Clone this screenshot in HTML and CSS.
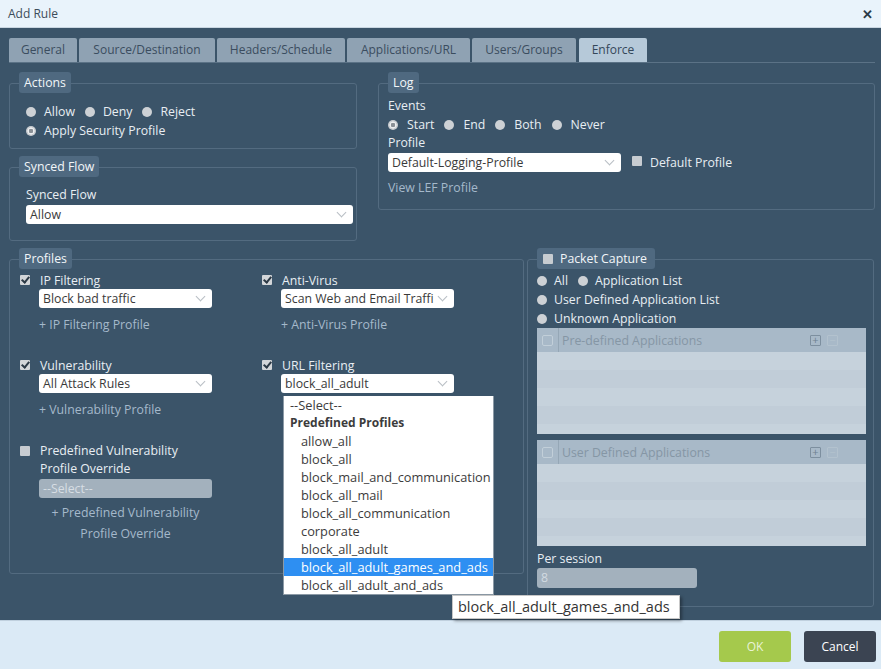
FILE: index.html
```html
<!DOCTYPE html>
<html>
<head>
<meta charset="utf-8">
<link rel="stylesheet" href="styles.css">
</head>
<body>
<div class="dialog">
  <div class="titlebar">
    <span class="title">Add Rule</span>
    <span class="close">&#x2715;</span>
  </div>
  <div class="main">
    <div class="tabs">
      <div class="tab w1">General</div>
      <div class="tab w2">Source/Destination</div>
      <div class="tab w3">Headers/Schedule</div>
      <div class="tab w4">Applications/URL</div>
      <div class="tab w5">Users/Groups</div>
      <div class="tab w6 active">Enforce</div>
    </div>

    <div class="toprow">
      <div class="leftcol">
        <div class="box actions">
          <div class="legend">Actions</div>
          <div class="radios pad16">
            <div class="line"><span class="radio"></span>Allow<span class="radio"></span>Deny<span class="radio"></span>Reject</div>
            <div class="line"><span class="radio on"></span>Apply Security Profile</div>
          </div>
        </div>
        <div class="box synced">
          <div class="legend">Synced Flow</div>
          <div class="syncbody">
            <div class="lbl">Synced Flow</div>
            <div class="select wide"><span>Allow</span><span class="chev"></span></div>
          </div>
        </div>
      </div>
      <div class="box log">
        <div class="legend">Log</div>
        <div class="logbody">
          <div class="lbl">Events</div>
          <div class="line radios-log"><span class="radio on"></span>Start<span class="radio"></span>End<span class="radio"></span>Both<span class="radio"></span>Never</div>
          <div class="lbl">Profile</div>
          <div class="profrow">
            <div class="select logsel"><span>Default-Logging-Profile</span><span class="chev"></span></div>
            <span class="check empty"></span><span class="dp">Default Profile</span>
          </div>
          <div class="link lef">View LEF Profile</div>
        </div>
      </div>
    </div>

    <div class="bottomrow">
      <div class="box profiles">
        <div class="legend">Profiles</div>
        <div class="pgrid">
          <div class="pcol first">
            <div class="pitem">
              <div class="chkline"><span class="check"></span>IP Filtering</div>
              <div class="select psel"><span>Block bad traffic</span><span class="chev"></span></div>
              <div class="link plink">+ IP Filtering Profile</div>
            </div>
            <div class="pitem">
              <div class="chkline"><span class="check"></span>Vulnerability</div>
              <div class="select psel"><span>All Attack Rules</span><span class="chev"></span></div>
              <div class="link plink">+ Vulnerability Profile</div>
            </div>
            <div class="pitem override">
              <div class="chkline two"><span class="check empty"></span><span>Predefined Vulnerability<br>Profile Override</span></div>
              <div class="select psel disabled"><span>--Select--</span></div>
              <div class="link center">+ Predefined Vulnerability<br>Profile Override</div>
            </div>
          </div>
          <div class="pcol">
            <div class="pitem">
              <div class="chkline"><span class="check"></span>Anti-Virus</div>
              <div class="select psel"><span class="clip">Scan Web and Email Traffi</span><span class="chev"></span></div>
              <div class="link plink">+ Anti-Virus Profile</div>
            </div>
            <div class="pitem">
              <div class="chkline"><span class="check"></span>URL Filtering</div>
              <div class="select psel"><span>block_all_adult</span><span class="chev"></span></div>
            </div>
          </div>
        </div>
      </div>

      <div class="box packet">
        <div class="legend pklegend"><span class="check empty"></span>Packet Capture</div>
        <div class="pkbody">
          <div class="line"><span class="radio"></span>All<span class="radio"></span>Application List</div>
          <div class="line"><span class="radio"></span>User Defined Application List</div>
          <div class="line l3"><span class="radio"></span>Unknown Application</div>
          <div class="grid">
            <div class="ghead"><span class="gchk"><span></span></span><span class="gtitle">Pre-defined Applications</span><span class="gbtn">+</span><span class="gbtn dim">&minus;</span></div>
            <div class="grow"></div><div class="grow alt"></div><div class="grow"></div><div class="grow alt"></div><div class="grow"></div>
          </div>
          <div class="grid g2">
            <div class="ghead"><span class="gchk"><span></span></span><span class="gtitle">User Defined Applications</span><span class="gbtn">+</span><span class="gbtn dim">&minus;</span></div>
            <div class="grow"></div><div class="grow alt"></div><div class="grow"></div><div class="grow alt"></div><div class="grow"></div>
          </div>
          <div class="lbl persess">Per session</div>
          <div class="numin">8</div>
        </div>
      </div>
    </div>

    <ul class="dropdown">
      <li>--Select--</li>
      <li class="grp">Predefined Profiles</li>
      <li class="sub">allow_all</li>
      <li class="sub">block_all</li>
      <li class="sub">block_mail_and_communication</li>
      <li class="sub">block_all_mail</li>
      <li class="sub">block_all_communication</li>
      <li class="sub">corporate</li>
      <li class="sub">block_all_adult</li>
      <li class="sub sel">block_all_adult_games_and_ads</li>
      <li class="sub">block_all_adult_and_ads</li>
    </ul>
    <div class="tooltip">block_all_adult_games_and_ads</div>
  </div>
  <div class="footer">
    <button class="btn ok">OK</button>
    <button class="btn cancel">Cancel</button>
  </div>
</div>
</body>
</html>
```

FILE: styles.css
```css
* { box-sizing: border-box; }
html, body { margin: 0; padding: 0; }
body {
  width: 881px;
  height: 669px;
  overflow: hidden;
  font-family: "Open Sans", "Noto Sans", sans-serif;
  font-size: 12.3px;
  color: #e8eef3;
}
.dialog { width: 881px; height: 669px; display: flex; flex-direction: column; }

.titlebar {
  height: 28px;
  background: #e9f3fb;
  border-bottom: 1px solid #c9d6e1;
  display: flex;
  align-items: center;
  justify-content: space-between;
  padding: 0 8px 0 8px;
  color: #3d4c5a;
}
.title { font-size: 12px; }
.close { font-size: 13px; font-weight: bold; color: #2b3a47; }

.main {
  position: relative;
  height: 592px;
  background: #3b5469;
  padding: 10px 6px 0 9px;
}

.tabs {
  display: flex;
  gap: 2px;
  height: 25px;
  border-bottom: 1px solid #5b7286;
  font-size: 12px;
}
.tab {
  height: 24px;
  line-height: 24px;
  text-align: center;
  background: #8fa2b3;
  color: #3b4d5f;
  border-radius: 2px 2px 0 0;
}
.tab.active { background: #b6c9d9; color: #34475a; }
.w1 { width: 68px; }
.w2 { width: 136px; }
.w3 { width: 128px; }
.w4 { width: 123px; }
.w5 { width: 104px; margin-right: 1px; }
.w6 { width: 68px; }

.box {
  border: 1px solid #536b80;
  border-radius: 3px;
}
.legend {
  display: flex;
  width: fit-content;
  align-items: center;
  height: 21px;
  margin-top: -12px;
  margin-left: 9px;
  padding: 0 5px;
  background: #4f6980;
  border-radius: 3px;
  color: #f2f6f9;
}
.pklegend { gap: 7px; padding: 0 8px 0 6px; }

.toprow { display: flex; gap: 21px; margin-top: 20px; }
.leftcol { width: 348px; display: flex; flex-direction: column; }
.actions { height: 66px; }
.synced { height: 74px; margin-top: 18px; }
.log { flex: 1; height: 127px; }

.line { display: flex; align-items: center; height: 19px; }
.radio {
  width: 10px; height: 10px; border-radius: 50%;
  background: #cdd1d5;
  margin-right: 8px;
  flex: none;
}
.radio ~ .radio { margin-left: 10px; }
.radio.on {
  background: radial-gradient(circle, #8a9096 0 2px, #eceef0 2.5px 3.3px, #c9cdd1 3.8px);
}
.pad16 { padding-left: 16px; margin-top: 9px; }

.check {
  width: 10px; height: 10px;
  background: #d3d6d9;
  border-radius: 1px;
  flex: none;
  position: relative;
}
.check::after {
  content: "";
  position: absolute;
  left: 3px; top: 0px;
  width: 3px; height: 6px;
  border: solid #2c3a46;
  border-width: 0 2px 2px 0;
  transform: rotate(40deg);
}
.check.empty::after { display: none; }
.check.empty { background: #c7ccd1; }

.lbl { height: 18px; line-height: 18px; }
.syncbody { padding: 9px 3px 0 16px; }
.syncbody .lbl { height: 19px; }

.select {
  height: 19px;
  background: #ffffff;
  border-radius: 3px;
  color: #3a3a3a;
  display: flex;
  align-items: center;
  justify-content: space-between;
  padding: 0 8px 0 4px;
  overflow: hidden;
  white-space: nowrap;
}
.chev {
  width: 7px; height: 7px;
  border: solid #b8bec4;
  border-width: 0 1px 1px 0;
  transform: rotate(45deg);
  margin-top: -5px;
  flex: none;
}
.wide { width: 327px; }

.logbody { padding: 4px 0 0 9px; }
.radios-log .radio { margin-right: 9px; }
.radios-log .radio ~ .radio { margin-left: 10px; }
.profrow { display: flex; align-items: center; margin-top: 1px; }
.logsel { width: 233px; }
.profrow .check { margin-left: 11px; margin-top: -4px; }
.dp { margin-left: 8px; }
.link { color: #a5b9cb; }
.lef { margin-top: 7px; height: 18px; line-height: 18px; }

.bottomrow { display: flex; gap: 3px; margin-top: 18px; }
.profiles { width: 515px; height: 315px; }
.packet { width: 347px; height: 348px; }

.pgrid { display: flex; padding-left: 10px; margin-top: 2px; }
.pcol { width: 252px; display: flex; flex-direction: column; }
.pcol.first { width: 242px; }
.pitem { height: 85px; }
.chkline { display: flex; align-items: center; height: 18px; gap: 10px; }
.chkline.two { align-items: flex-start; height: 37px; line-height: 18px; }
.chkline.two .check { margin-top: 4px; }
.psel { width: 173px; margin-left: 19px; }
.clip { white-space: nowrap; }
.plink { margin-left: 19px; margin-top: 8px; height: 18px; line-height: 18px; }
.override { margin-top: 1px; }
.disabled { background: #a3b1bd; color: #d7dee4; }
.center { width: 173px; margin-left: 19px; text-align: center; line-height: 21px; margin-top: 4px; }

.pkbody { padding: 2px 6px 0 9px; }
.pkbody .line .radio { margin-right: 7px; }
.pkbody .line .radio ~ .radio { margin-left: 10px; }
.grid { width: 329px; background: #c5d1db; margin-top: 0; height: 106px; overflow: hidden; }
.g2 { margin-top: 6px; }
.ghead { height: 24px; background: #a8b9c8; display: flex; align-items: center; color: #8596a5; }
.gchk { width: 22px; height: 24px; border-right: 1px solid #95a7b6; display: flex; align-items: center; justify-content: center; }
.gchk span { width: 11px; height: 11px; border: 1px solid #c2cfd9; border-radius: 2px; }
.gtitle { margin-left: 3px; flex: 1; }
.gbtn {
  width: 11px; height: 11px; border: 1px solid #7d8f9f; border-radius: 1px;
  font-size: 11px; line-height: 8px; text-align: center; color: #6f8292; margin-right: 6px;
}
.gbtn.dim { border-color: #b3c2ce; color: #b3c2ce; margin-right: 28px; }
.grow { height: 18px; background: #c6d2dc; }
.grow.alt { background: #c1cdd8; }
.persess { margin-top: 4px; }
.numin {
  width: 160px; height: 20px; background: #a3b1bd; border-radius: 3px;
  color: #d2dae1; padding-left: 4px; line-height: 20px;
}

.dropdown {
  position: absolute;
  left: 283px;
  top: 368px;
  width: 211px;
  margin: 0; padding: 0;
  list-style: none;
  background: #ffffff;
  border: 1px solid #8c9aa6;
  border-top: none;
  color: #3c3c3c;
  font-size: 12.8px;
}
.dropdown li { height: 18px; line-height: 18px; padding-left: 6px; white-space: nowrap; }
.dropdown .grp { font-weight: bold; font-size: 12px; }
.dropdown .sub { padding-left: 17px; }
.dropdown .sel { background: #2e8ff2; color: #ffffff; }

.tooltip {
  position: absolute;
  left: 452px;
  top: 567px;
  width: 228px;
  height: 24px;
  background: #ffffff;
  border: 1px solid #c7c7c7;
  box-shadow: 2px 2px 3px rgba(0,0,0,0.35);
  color: #333333;
  font-size: 14.5px;
  line-height: 22px;
  padding-left: 5px;
}

.footer {
  flex: 1;
  background: #dbeaf6;
  border-top: 1px solid #c0d0de;
  display: flex;
  justify-content: flex-end;
  align-items: flex-start;
  padding: 10px 5px 0 0;
  gap: 13px;
}
.btn {
  width: 72px; height: 31px;
  border: none; border-radius: 3px;
  font-family: "Open Sans", sans-serif;
  font-size: 12px;
}
.ok { background: #a5c94c; color: #e9f3d6; }
.cancel { background: #3b4452; color: #ffffff; }
```
